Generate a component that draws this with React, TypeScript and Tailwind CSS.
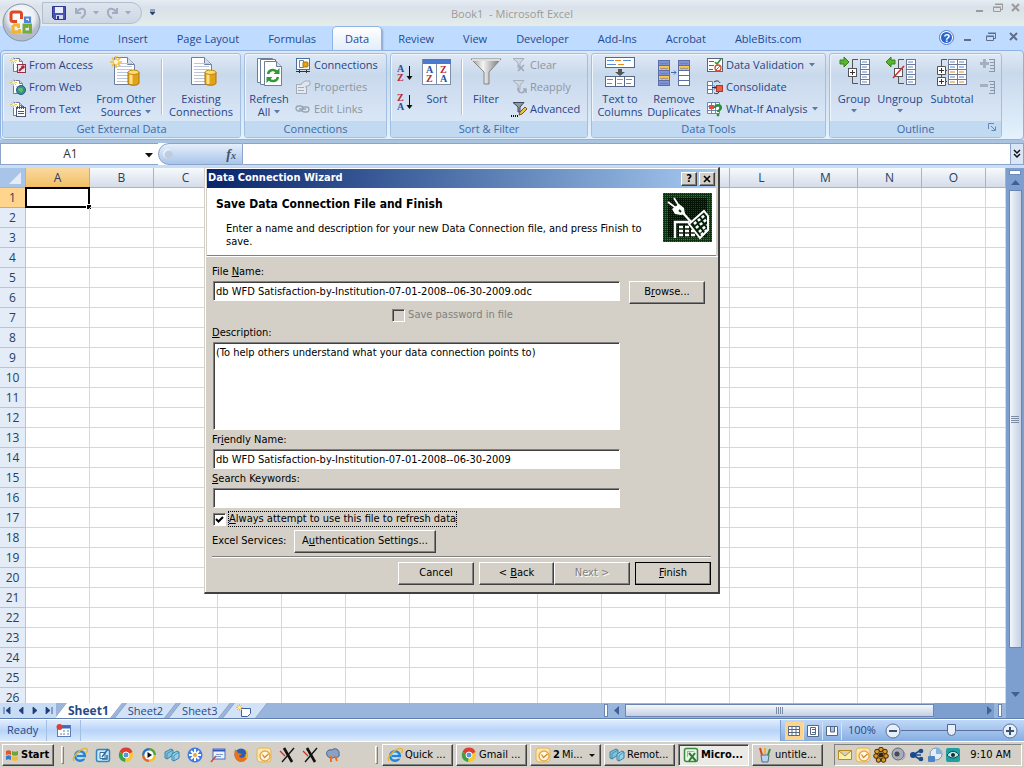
import type { ReactNode } from "react";
import clsx from "clsx";

type IconProps = { size?: number; className?: string; children?: ReactNode };

function Svg({ size = 16, className, children }: IconProps) {
  return (
    <svg width={size} height={size} viewBox={`0 0 ${size} ${size}`} className={clsx("shrink-0", className)} aria-hidden="true">
      {children}
    </svg>
  );
}

/* ---------- shared icon parts ---------- */

function Spark({ x = 0, y = 0, s = 1 }: { x?: number; y?: number; s?: number }) {
  return (
    <g transform={`translate(${x} ${y}) scale(${s})`} stroke="#f2bd3c" strokeWidth="1.4">
      <path d="M5 0v10M0 5h10M1.5 1.5l7 7M8.5 1.5l-7 7" />
      <circle cx="5" cy="5" r="1.8" fill="#fff9d0" stroke="none" />
    </g>
  );
}

function Sheet({ x, y, w, h }: { x: number; y: number; w: number; h: number }) {
  const fold = Math.round(w / 3);
  const lines = [];
  for (let i = 5; i < h - 2; i += 3) lines.push(i);
  return (
    <g transform={`translate(${x} ${y})`}>
      <path d={`M.5 .5H${w - fold}L${w + 0.5} ${fold + 0.5}V${h - 0.5}H.5Z`} fill="#fff" stroke="#6d7f99" />
      <path d={`M${w - fold + 0.5} .5V${fold + 0.5}H${w}`} fill="#d5dfec" stroke="#6d7f99" />
      {lines.map((l) => (
        <path key={l} d={`M3 ${l + 1.5}H${w - 2}`} stroke="#b9c6d9" />
      ))}
    </g>
  );
}

function Cylinder({ x, y }: { x: number; y: number }) {
  return (
    <g transform={`translate(${x} ${y})`}>
      <path d="M0 2v11c0 3 11 3 11 0V2" fill="#e2a416" stroke="#a97408" />
      <path d="M3 4v10" stroke="#fbe28a" strokeWidth="3" />
      <ellipse cx="5.5" cy="2.3" rx="5.5" ry="2.2" fill="#fbdc72" stroke="#b9860f" />
    </g>
  );
}

/* ---------- ribbon icons ---------- */

function FromIcon({ kind }: { kind: "access" | "web" | "text" }) {
  return (
    <Svg>
      <Sheet x={3} y={1} w={9} h={14} />
      <Spark s={0.7} />
      {kind === "access" && (
        <>
          <rect x="7.500" y="7.500" width="8" height="8" fill="#f6e4ea" stroke="#9b2d45" />
          <path d="M9 14l4-4" stroke="#9b2d45" strokeWidth="2" />
          <circle cx="13" cy="10" r="1.800" fill="#9b2d45" />
        </>
      )}
      {kind === "web" && (
        <>
          <circle cx="11" cy="11" r="4.500" fill="#3c8f8a" stroke="#1f5d86" />
          <path d="M9 9l3 0 1 2-2 3-1-2-2-1z" fill="#63c06a" />
        </>
      )}
      {kind === "text" && (
        <>
          <rect x="6.500" y="6.500" width="9" height="9" fill="#fff" stroke="#4b5a70" />
          <path d="M7.500 5v3M9.500 5v3M11.500 5v3M13.500 5v3M8 10.500h6M8 12.500h6" stroke="#4b5a70" />
        </>
      )}
    </Svg>
  );
}

const OtherSourcesIcon = () => (
  <Svg size={32}>
    <Sheet x={4} y={1} w={20} h={28} />
    <Spark x={0} y={0} s={1.2} />
    <Cylinder x={18} y={14} />
  </Svg>
);

const ExistingIcon = () => (
  <Svg size={32}>
    <Sheet x={6} y={1} w={20} h={28} />
    <Cylinder x={20} y={14} />
  </Svg>
);

const RefreshIcon = () => (
  <Svg size={32}>
    <path d="M4.500 2.500h15v24h-15z" fill="#fff" stroke="#6d7f99" />
    <path d="M7.500 3.500h15v25h-15z" fill="#fff" stroke="#6d7f99" />
    <path d="M11.500 5.500h12l5 5v19h-17z" fill="#fff" stroke="#6d7f99" />
    <path d="M23.500 5.500v5h5" fill="#d5dfec" stroke="#6d7f99" />
    <path d="M15 18c1-5 7-5 9-2M25 21c-1 5-7 5-9 2" stroke="#2f9a3a" strokeWidth="2.400" fill="none" />
    <path d="M26.500 12v6h-6zM13.500 27v-6h6z" fill="#2f9a3a" />
  </Svg>
);

const ConnectionsIcon = () => (
  <Svg>
    <rect x="1.500" y="1.500" width="13" height="11" fill="#fff" stroke="#4b6ea0" />
    <path d="M4.500 3.500v7h4v-7z" fill="#fff" stroke="#6d7f99" />
    <rect x="8" y="5" width="5" height="5" rx="1" fill="#e2a416" stroke="#a97408" />
    <path d="M1 14.500h14M4.500 13v3M11.500 13v3" stroke="#333" />
  </Svg>
);

const PropertiesIcon = () => (
  <Svg>
    <rect x="1.500" y="5.500" width="10" height="9" fill="#e5eaf1" stroke="#a3adba" />
    <path d="M3 8.500h6M3 11.500h6" stroke="#a3adba" />
    <path d="M6 5l4-3h5v4l-5 2" fill="#dfe5ed" stroke="#a3adba" />
  </Svg>
);

const LinksIcon = () => (
  <Svg>
    <g fill="none" stroke="#9aa5b3" strokeWidth="1.300">
      <rect x="1" y="5" width="7" height="5" rx="2.500" />
      <rect x="7" y="6" width="7" height="5" rx="2.500" />
      <path d="M4 8h7" />
    </g>
  </Svg>
);

function SortArrowIcon({ top, bottom }: { top: string; bottom: string }) {
  return (
    <svg width="16" height="18" viewBox="0 0 16 18" className="font-['Liberation_Serif'] text-[10px] font-bold" aria-hidden="true">
      <text x="0" y="8" fill={top === "A" ? "#27509b" : "#b22a34"}>{top}</text>
      <text x="0" y="17" fill={bottom === "A" ? "#27509b" : "#b22a34"}>{bottom}</text>
      <path d="M12.500 2v12" stroke="#111" />
      <path d="M9.500 12h6l-3 4z" fill="#111" />
    </svg>
  );
}

const SortIcon = () => (
  <svg width="32" height="32" viewBox="0 0 32 32" className="font-['Liberation_Serif'] text-[10px] font-bold" aria-hidden="true">
    <rect x="1.500" y="3.500" width="28" height="25" fill="#fff" stroke="#7d8ea8" />
    <rect x="2" y="3" width="28" height="5" fill="#4a7ad0" />
    <path d="M15.500 8v20" stroke="#7d8ea8" />
    <text x="5" y="17" fill="#27509b">A</text>
    <text x="5" y="26" fill="#b22a34">Z</text>
    <text x="19" y="17" fill="#b22a34">Z</text>
    <text x="19" y="26" fill="#27509b">A</text>
  </svg>
);

const FilterIcon = () => (
  <Svg size={32}>
    <defs>
      <linearGradient id="funnel">
        <stop offset="0" stopColor="#8e8e8e" />
        <stop offset=".4" stopColor="#f4f4f4" />
        <stop offset="1" stopColor="#6f6f6f" />
      </linearGradient>
    </defs>
    <path d="M1 3h30L19 16v12h-5V16z" fill="url(#funnel)" stroke="#848484" />
    <path d="M2 4h28" stroke="#ddd" strokeWidth="2" />
  </Svg>
);

function SmallFilterIcon({ kind }: { kind: "clear" | "reapply" | "advanced" }) {
  const dark = kind === "advanced";
  return (
    <Svg>
      <path d="M2 1.500h11L9 6v5H7V6z" fill={dark ? "#8f98a5" : "#cfd7e0"} stroke={dark ? "#3f4854" : "#a6b0bd"} />
      {kind === "clear" && <path d="M7 8l6 6M13 8l-6 6" stroke="#9fa9b6" strokeWidth="1.600" />}
      {kind === "reapply" && <path d="M7 9c0 6 6 6 7 1M12 10h3v4" stroke="#9fa9b6" strokeWidth="1.500" fill="none" />}
      {dark && (
        <>
          <path d="M8 14l1-3 5-5 2 2-5 5z" fill="#f2c14a" stroke="#7a5412" />
          <path d="M0 15h8" stroke="#111" strokeDasharray="1 1" strokeWidth="2" />
        </>
      )}
    </Svg>
  );
}

const TextToColumnsIcon = () => (
  <Svg size={32}>
    <rect x="1.500" y="1.500" width="29" height="10" fill="#fff" stroke="#56688a" />
    <path d="M3 4.500h7M19 4.500h8M3 8.500h9" stroke="#5b8bd0" />
    <path d="M11 4.500h6M14 8.500h6" stroke="#e2891b" />
    <path d="M14 13h4v3h3l-5 4-5-4h3z" fill="#555" />
    <rect x="1.500" y="20.500" width="29" height="10" fill="#fff" stroke="#56688a" />
    <path d="M11.500 20v10M20.500 20v10" stroke="#56688a" />
    <path d="M3 23.500h6M22 23.500h6M3 27.500h5M22 27.500h5" stroke="#5b8bd0" />
    <path d="M13 23.500h6M13 27.500h5" stroke="#e2891b" />
  </Svg>
);

const DuplicatesIcon = () => (
  <Svg size={32}>
    {[4, 9, 14, 19, 24].map((y, i) => (
      <g key={y} stroke="#5b6ea8">
        <rect x="0.500" y={y + 0.5} width="11" height="5" fill={i % 2 ? "#fbc650" : "#8294d6"} />
        <rect x="20.500" y={y + 0.5} width="11" height="5" fill={i === 0 ? "#8294d6" : i === 1 ? "#fbc650" : "#fff"} />
        <path d={`M2 ${y + 3}l2 1 2-1 2 1 2-1`} fill="none" strokeWidth=".7" />
        {i < 2 && <path d={`M22 ${y + 3}l2 1 2-1 2 1 2-1`} fill="none" strokeWidth=".7" />}
      </g>
    ))}
    <path d="M13 16.500h5M16 14.500l2 2-2 2" stroke="#3e6bb5" fill="none" />
  </Svg>
);

const ValidationIcon = () => (
  <Svg>
    <rect x=".5" y="1.500" width="15" height="13" fill="#fff" stroke="#5a6577" />
    <path d="M2 4.500h5M2 8.500h5M2 12.500h4" stroke="#5a6577" />
    <path d="M8 5l2 2 4-5" stroke="#2b9436" strokeWidth="1.600" fill="none" />
    <circle cx="11" cy="11" r="3" fill="#fff" stroke="#dd4b2c" strokeWidth="1.300" />
    <path d="M9 13l4-4" stroke="#dd4b2c" />
  </Svg>
);

const ConsolidateIcon = () => (
  <Svg>
    <path d="M.5 2.500h5v12h-5zM.5 6.500h5M.5 10.500h5" fill="#fff" stroke="#5d7eae" />
    <rect x="9.500" y="6.500" width="6" height="6" fill="#e8604c" stroke="#a93a2b" />
    <path d="M7 3c3-2 5-1 6 1M7 14c2 1 4 1 5-1M5 8.500h4M7 6.500l2 2-2 2" stroke="#333" fill="none" />
  </Svg>
);

const WhatIfIcon = () => (
  <Svg>
    <path d="M.5 1.500h12v11H.5zM4.500 1.500v11M8.500 1.500v11M.5 5.500h12M.5 9.500h12" fill="#fff" stroke="#6f86ad" />
    <rect x="2" y="4" width="5" height="4" fill="#e24a3c" />
    <path d="M8 7c0-4 6-4 6 0 0 2-3 2-3 4" stroke="#2c9136" strokeWidth="2.200" fill="none" />
    <circle cx="11" cy="14" r="1.400" fill="#2c9136" />
  </Svg>
);

function OutlineIcon({ kind }: { kind: "group" | "ungroup" | "subtotal" }) {
  const rows = [3, 8, 13, 18, 23];
  if (kind === "subtotal") {
    return (
      <Svg size={32}>
        {rows.map((y, i) => (
          <g key={y}>
            <rect x="12.500" y={y + 0.5} width="9" height="5" fill="#fff" stroke="#6d7890" />
            <rect x="21.500" y={y + 0.5} width="9" height="5" fill="#fff" stroke="#6d7890" />
            <path d={`M14 ${y + 3}h5M23 ${y + 3}h5`} stroke={i === 2 || i === 4 ? "#e2891b" : "#5b8bd0"} />
          </g>
        ))}
        <path d="M11 3.500H5.500V25M5 14.500h6M5 25.500h6" stroke="#555" fill="none" />
        <path d="M1.500 10.500h8v8h-8zM1.500 21.500h8v8h-8z" fill="#fff" stroke="#555" />
        <path d="M3 14.500h5M5.500 12v5M3 25.500h5M5.500 23v5" stroke="#333" />
      </Svg>
    );
  }
  return (
    <Svg size={32}>
      {rows.map((y) => (
        <g key={y}>
          <rect x="22.500" y={y + 0.5} width="9" height="5" fill="#fff" stroke="#6d7890" />
          <path d={`M24 ${y + 3}h5`} stroke="#5b8bd0" />
        </g>
      ))}
      <path d="M20 3.500h-5.500v24H20" stroke="#555" fill="none" />
      <rect x="10.500" y="12.500" width="8" height="8" fill="#fff" stroke="#555" />
      {kind === "group" ? (
        <>
          <path d="M12 16.500h5M14.500 14v5" stroke="#333" />
          <path d="M2 4h4V1l5 5-5 5V8H2z" fill="#59b530" stroke="#3a7e1c" />
        </>
      ) : (
        <>
          <path d="M9 22L20 10" stroke="#e0262a" strokeWidth="1.500" />
          <path d="M11 4H7V1L2 6l5 5V8h4z" fill="#59b530" stroke="#3a7e1c" />
        </>
      )}
    </Svg>
  );
}

function DetailIcon({ minus }: { minus?: boolean }) {
  return (
    <Svg>
      <path d={minus ? "M0 4h8v3H0z" : "M3 1h3v3h3v3H6v3H3V7H0V4h3z"} fill="#a6b0bd" />
      <path d="M9 1.500h6M10 4.500h5M10 7.500h5M10 10.500h5M9 13.500h6M14.500 1v13" stroke="#8997ab" />
    </Svg>
  );
}

/* ---------- ribbon pieces ---------- */

const Arrow = ({ className }: { className?: string }) => (
  <svg width="6" height="4" viewBox="0 0 6 4" className={clsx("inline-block shrink-0", className)} aria-hidden="true">
    <path d="M0 0h6L3 3.500z" fill="#5a7ba8" />
  </svg>
);

function BigButton({ icon, lines, arrow, className }: { icon: ReactNode; lines: string[]; arrow?: "inline" | "below"; className?: string }) {
  return (
    <button className={clsx("flex shrink-0 flex-col items-center pt-[2px] leading-[13px] whitespace-nowrap", className)}>
      {icon}
      <span className="mt-1">{lines[0]}</span>
      {lines[1] && (
        <span className="flex items-center gap-1">
          {lines[1]}
          {arrow === "inline" && <Arrow />}
        </span>
      )}
      {arrow === "below" && <Arrow className="mt-1" />}
    </button>
  );
}

function SmallButton({ icon, label, arrow, disabled }: { icon: ReactNode; label: string; arrow?: boolean; disabled?: boolean }) {
  return (
    <button disabled={disabled} className="flex h-[22px] items-center gap-[3px] whitespace-nowrap disabled:text-[#8d95a0]">
      {icon}
      {label}
      {arrow && <Arrow className="ml-[2px]" />}
    </button>
  );
}

function Group({ title, className, launcher, children }: { title: string; className: string; launcher?: boolean; children: ReactNode }) {
  return (
    <section className={clsx("flex shrink-0 flex-col overflow-hidden rounded-[3px] border border-[#a3bfdf] bg-linear-to-b from-[#dfe9f5] via-[#c9d9ec] via-25% to-[#dfebfa] shadow-[inset_1px_1px_0_#eef5fd]", className)}>
      <div className="flex h-[68px] px-[6px]">{children}</div>
      <h2 className="relative h-4 bg-[#c1d9f1] text-center leading-[15px] text-[#3e6aaa]">
        {title}
        {launcher && (
          <button aria-label="Outline settings" className="absolute top-[2px] right-1">
            <svg width="9" height="9" viewBox="0 0 9 9" className="block" aria-hidden="true">
              <path d="M.5 6V.5H6M3 3l4 4M7.500 3.500v4h-4" stroke="#6287b8" fill="none" />
            </svg>
          </button>
        )}
      </h2>
    </section>
  );
}

const Rule = ({ className }: { className?: string }) => <div className={clsx("mt-[5px] h-14 w-px shrink-0 bg-white shadow-[-1px_0_0_#a9c1de]", className)} />;

function WindowControls({ className }: { className?: string }) {
  return (
    <div className={clsx("flex items-center", className)}>
      <button aria-label="Minimize">
        <Svg size={12}><path d="M2 9h7" stroke="currentColor" strokeWidth="2" /></Svg>
      </button>
      <button aria-label="Restore">
        <Svg size={12}><path d="M1.500 5.500h7v4h-7zM1 5h8M3.500 3V2.500h7v5H9M3 2h8" stroke="currentColor" fill="none" /></Svg>
      </button>
      <button aria-label="Close">
        <Svg size={12}><path d="M2 2l7 7M9 2l-7 7" stroke="currentColor" strokeWidth="2" /></Svg>
      </button>
    </div>
  );
}

function TitleBar() {
  return (
    <header className="relative flex h-[26px] shrink-0 items-center justify-center bg-linear-to-b from-[#e6ecf3] via-[#dae1ea] via-30% to-[#e5ece9] pt-[2px] text-[#9b9b9b]">
      <div className="absolute top-[2px] left-[42px] flex h-[22px] items-center rounded-r-full border border-[#b3bfd0] bg-linear-to-b from-[#dde4ed] to-[#cdd7e4] pr-[10px] pl-[8px]">
        <button aria-label="Save">
          <Svg>
            <path d="M1.500 1.500h13v13h-11l-2-2z" fill="#4a52b5" stroke="#2f3690" />
            <rect x="4" y="2" width="8" height="6" fill="#e9eefb" />
            <rect x="5" y="10" width="7" height="4" fill="#d4daf0" />
            <rect x="6" y="11" width="2" height="3" fill="#2f3690" />
          </Svg>
        </button>
        <button aria-label="Undo" className="ml-[6px] flex items-center gap-1">
          <Svg><path d="M3 3v5h5M3.500 7.500C7 2 13 3 12 8c0 3-2 4-4 5" stroke="#a2adc4" strokeWidth="2" fill="none" /></Svg>
          <Arrow className="opacity-50" />
        </button>
        <button aria-label="Redo" className="ml-[6px] flex items-center gap-1">
          <Svg><path d="M12 3v5H7M11.500 7.500C8 2 2 3 3 8c0 3 2 4 4 5" stroke="#a2adc4" strokeWidth="2" fill="none" /></Svg>
          <Arrow className="opacity-50" />
        </button>
      </div>
      <button aria-label="Customize" className="absolute top-[9px] left-[149px]">
        <Svg size={7} className="block"><path d="M1 1h5M1 3h5L3.500 6z" stroke="#27446f" fill="#27446f" strokeWidth=".8" /></Svg>
      </button>
      <h1 className="text-[11px]">Book1&nbsp; - Microsoft Excel</h1>
      <WindowControls className="absolute top-[2px] right-[2px] gap-[6px]" />
    </header>
  );
}

const OfficeButton = () => (
  <button aria-label="Office Button" className="absolute top-[3px] left-[2px] z-10">
    <svg width="39" height="39" viewBox="0 0 39 39" aria-hidden="true">
      <defs>
        <radialGradient id="orb" cy=".35">
          <stop offset="0" stopColor="#fff" />
          <stop offset=".7" stopColor="#eceff3" />
          <stop offset="1" stopColor="#b4bcc9" />
        </radialGradient>
      </defs>
      <circle cx="19.500" cy="19.500" r="18.500" fill="url(#orb)" stroke="#8793a8" />
      <g fill="none" strokeWidth="3">
        <path d="M15 18.500h-4a2 2 0 0 1-2-2V11a2 2 0 0 1 2-2h6.500a2 2 0 0 1 2 2v5" stroke="#dd4a22" />
        <path d="M23 14.500h5v4.500h-5zM25 17v2" stroke="#4f87d6" strokeWidth="2.200" />
        <path d="M11 22h5.500v3M11 22v7h6.500v-3" stroke="#f6b42a" />
        <path d="M22 22h6.500v7H22zM25 22v3" stroke="#74ab3a" />
      </g>
    </svg>
  </button>
);

const tabs = ["Home", "Insert", "Page Layout", "Formulas", "Data", "Review", "View", "Developer", "Add-Ins", "Acrobat", "AbleBits.com"];

function TabRow() {
  return (
    <nav className="flex h-6 shrink-0 items-end justify-between bg-[#bfdbff] pl-[46px] text-[#1f4a92]">
      <div className="flex gap-[5px]">
        {tabs.map((t) => (
          <button
            key={t}
            className={clsx(
              "h-[23px] rounded-t-[4px] px-3 leading-[22px] whitespace-nowrap",
              t === "Data" && "bg-linear-to-b from-white to-[#e3edf9] shadow-[0_0_0_1px_#8db2e3,2px_1px_2px_#8aa5cc]"
            )}
          >
            {t}
          </button>
        ))}
      </div>
      <div className="flex h-full items-center gap-2 pr-1 pb-[2px] text-[#5f6f8a]">
        <button aria-label="Help">
          <svg width="15" height="15" viewBox="0 0 15 15" className="font-['Liberation_Sans'] text-[11px] font-bold" aria-hidden="true">
            <circle cx="7.500" cy="7.500" r="7" fill="#fff" stroke="#4d79c4" />
            <circle cx="7.500" cy="7.500" r="5.500" fill="#2a62c9" />
            <text x="4.500" y="11.500" fill="#fff">?</text>
          </svg>
        </button>
        <WindowControls className="gap-[11px]" />
      </div>
    </nav>
  );
}

function Ribbon() {
  return (
    <div className="relative flex h-[90px] shrink-0 gap-[3px] overflow-hidden rounded-[4px] border border-[#8db2e3] bg-linear-to-b from-[#dfe9f5] via-[#c9d9ec] via-25% to-[#e3f2fd] px-px pt-[2px] pb-px text-[#27468a]">
      <Group title="Get External Data" className="w-[239px]">
        <div className="w-[84px] shrink-0 pl-px">
          <SmallButton icon={<FromIcon kind="access" />} label="From Access" />
          <SmallButton icon={<FromIcon kind="web" />} label="From Web" />
          <SmallButton icon={<FromIcon kind="text" />} label="From Text" />
        </div>
        <BigButton className="w-[66px]" icon={<OtherSourcesIcon />} lines={["From Other", "Sources"]} arrow="inline" />
        <Rule className="ml-[3px]" />
        <BigButton className="w-[76px]" icon={<ExistingIcon />} lines={["Existing", "Connections"]} />
      </Group>
      <Group title="Connections" className="w-[143px]">
        <BigButton className="w-9" icon={<RefreshIcon />} lines={["Refresh", "All"]} arrow="inline" />
        <div className="ml-2">
          <SmallButton icon={<ConnectionsIcon />} label="Connections" />
          <SmallButton icon={<PropertiesIcon />} label="Properties" disabled />
          <SmallButton icon={<LinksIcon />} label="Edit Links" disabled />
        </div>
      </Group>
      <Group title="Sort & Filter" className="w-[198px]">
        <div className="flex w-4 flex-col gap-[11px] pt-[10px]">
          <button aria-label="Sort A to Z"><SortArrowIcon top="A" bottom="Z" /></button>
          <button aria-label="Sort Z to A"><SortArrowIcon top="Z" bottom="A" /></button>
        </div>
        <BigButton className="ml-[6px] w-9" icon={<SortIcon />} lines={["Sort"]} />
        <Rule className="ml-[7px]" />
        <BigButton className="ml-[7px] w-8" icon={<FilterIcon />} lines={["Filter"]} />
        <div className="ml-[9px]">
          <SmallButton icon={<SmallFilterIcon kind="clear" />} label="Clear" disabled />
          <SmallButton icon={<SmallFilterIcon kind="reapply" />} label="Reapply" disabled />
          <SmallButton icon={<SmallFilterIcon kind="advanced" />} label="Advanced" />
        </div>
      </Group>
      <Group title="Data Tools" className="w-[235px]">
        <BigButton className="w-11" icon={<TextToColumnsIcon />} lines={["Text to", "Columns"]} />
        <BigButton className="ml-1 w-14" icon={<DuplicatesIcon />} lines={["Remove", "Duplicates"]} />
        <div className="ml-[5px]">
          <SmallButton icon={<ValidationIcon />} label="Data Validation" arrow />
          <SmallButton icon={<ConsolidateIcon />} label="Consolidate" />
          <SmallButton icon={<WhatIfIcon />} label="What-If Analysis" arrow />
        </div>
      </Group>
      <Group title="Outline" className="w-[173px]" launcher>
        <BigButton className="w-9" icon={<OutlineIcon kind="group" />} lines={["Group"]} arrow="below" />
        <BigButton className="ml-[3px] w-[50px]" icon={<OutlineIcon kind="ungroup" />} lines={["Ungroup"]} arrow="below" />
        <BigButton className="ml-[3px] w-12" icon={<OutlineIcon kind="subtotal" />} lines={["Subtotal"]} />
        <div className="ml-1 flex flex-col gap-[6px] pt-1">
          <button aria-label="Show Detail"><DetailIcon /></button>
          <button aria-label="Hide Detail"><DetailIcon minus /></button>
        </div>
      </Group>
    </div>
  );
}

function FormulaBar() {
  return (
    <div className="flex h-7 shrink-0 border-t-[3px] border-b-[3px] border-t-[#a9c3e0] border-b-[#c9def5] bg-white text-[12px]">
      <input aria-label="Name Box" defaultValue="A1" className="w-[140px] border-y border-l border-[#8ba4c7] bg-white text-center text-[#333] outline-none" />
      <button aria-label="Names" className="w-[18px] border-y border-[#8ba4c7] pl-1">
        <Svg size={9}><path d="M1 3h8L5 7.500z" fill="#111" /></Svg>
      </button>
      <div className="flex w-[85px] items-center justify-between rounded-l-full border border-[#8ba4c7] bg-linear-to-b from-[#e6effb] to-[#a9c4ea] pr-[6px] pl-1">
        <span className="size-[10px] rounded-full bg-[#bccbe0] shadow-[inset_1px_1px_2px_#fff]" />
        <button aria-label="Insert Function" className="font-['Liberation_Serif'] text-[14px] font-bold text-[#44546f] italic">
          f<span className="text-[10px]">x</span>
        </button>
      </div>
      <input aria-label="Formula" className="min-w-0 flex-1 border-y border-[#8ba4c7] bg-white outline-none" />
      <button aria-label="Expand Formula Bar" className="w-[14px] border border-[#8ba4c7] bg-[#d8e6f8]">
        <Svg size={12}><path d="M3 2l3 3 3-3M3 6l3 3 3-3" stroke="#111" strokeWidth="1.500" fill="none" /></Svg>
      </button>
    </div>
  );
}

const columns = ["A", "B", "C", "D", "E", "F", "G", "H", "I", "J", "K", "L", "M", "N", "O", ""];
const rows = Array.from({ length: 26 }, (_, i) => i + 1);

function Grid() {
  return (
    <table className="w-full table-fixed border-separate border-spacing-0 bg-white text-[12px] text-[#27405f]">
      <thead>
        <tr className="h-5">
          <th aria-label="Select all" className="w-[26px] border-r border-b border-[#9eb6ce] bg-[#a9c4e9] p-0">
            <Svg size={18} className="ml-1"><path d="M17 3v12H5z" fill="#e3ecf8" /></Svg>
          </th>
          {columns.map((c) => (
            <th
              key={c}
              className={clsx(
                "border-r border-b p-0 leading-[19px] font-normal",
                c && "w-16",
                c === "A" ? "border-[#e2a65c] bg-linear-to-b from-[#f9d99f] to-[#f1bf63]" : "border-[#9eb6ce] bg-linear-to-b from-[#f7fafd] to-[#d5dde9]"
              )}
            >
              {c}
            </th>
          ))}
        </tr>
      </thead>
      <tbody>
        {rows.map((r) => (
          <tr key={r} className="h-5">
            <th className={clsx("border-r border-b p-0 leading-[19px] font-normal", r === 1 ? "border-[#e2a65c] bg-[#ffd58d]" : "border-[#b3c6de] bg-[#e4ecf7]")}>{r}</th>
            {columns.map((c) => (
              <td key={c} className="relative border-r border-b border-[#d0d7e5] p-0">
                {r === 1 && c === "A" && (
                  <span className="absolute -inset-px border-2 border-black">
                    <span className="absolute -right-[3px] -bottom-[3px] size-[5px] border-t border-l border-white bg-black" />
                  </span>
                )}
              </td>
            ))}
          </tr>
        ))}
      </tbody>
    </table>
  );
}

function VerticalScrollbar() {
  return (
    <div className="flex w-[18px] shrink-0 flex-col items-center bg-[#7d9fd0] pt-[2px] pb-1">
      <span className="h-[5px] w-3 border border-[#6d8cbd] bg-white" />
      <button aria-label="Scroll up" className="grid h-[15px] place-items-center">
        <Svg size={9}><path d="M0 7h9L4.500 2z" fill="#3f5f96" /></Svg>
      </button>
      <div className="flex w-[13px] flex-1 flex-col items-center justify-center gap-px border border-[#6a85b3] bg-linear-to-r from-[#f2f5fa] to-[#c3cfe2]">
        {[0, 1, 2, 3].map((i) => (
          <span key={i} className="h-px w-2 bg-[#7d8ba5]" />
        ))}
      </div>
      <div className="h-[42px]" />
      <button aria-label="Scroll down">
        <Svg size={9}><path d="M0 2h9L4.500 7z" fill="#3f5f96" /></Svg>
      </button>
    </div>
  );
}

function SheetTab({ label, active, children }: { label?: string; active?: boolean; children?: ReactNode }) {
  return (
    <button
      aria-label={label ?? "Insert Worksheet"}
      className={clsx(
        "relative isolate -ml-px h-[15px] px-2 leading-[15px] before:absolute before:inset-0 before:-z-10 before:-skew-x-[38deg] before:border-x before:border-[#7c97c1]",
        active ? "z-10 text-[12px] font-bold before:bg-white" : "before:bg-[#d3e2f7]"
      )}
    >
      {label}
      {children}
    </button>
  );
}

const navPaths = ["M2 1v7M8 1v7L4 4.500z", "M7 1v7L3 4.500z", "M3 1v7l4-3.500z", "M8 1v7M2 1v7l4-3.500z"];

function SheetTabs() {
  return (
    <div className="flex h-4 shrink-0 items-start border-b border-[#5f7fb2] bg-[#9ab5dc] text-[#274a86]">
      <div className="flex h-full w-[56px] shrink-0 items-center justify-around bg-[#c9dcf5]">
        {navPaths.map((d) => (
          <button key={d} aria-label="Scroll sheets">
            <Svg size={10}><path d={d} fill="#1f3f7a" stroke="#1f3f7a" strokeWidth=".8" /></Svg>
          </button>
        ))}
      </div>
      <div className="flex flex-1 gap-1 overflow-hidden pl-[5px]">
        <SheetTab label="Sheet1" active />
        <SheetTab label="Sheet2" />
        <SheetTab label="Sheet3" />
        <SheetTab>
          <svg width="18" height="14" viewBox="0 0 18 14" aria-hidden="true">
            <path d="M5.500 4.500h9v5l-3 3h-6z" fill="#fff" stroke="#40609a" />
            <Spark s={0.7} />
          </svg>
        </SheetTab>
      </div>
      <div className="flex h-full w-[420px] shrink-0 items-center">
        <span className="h-[13px] w-1 border border-[#6a85b3] bg-white" />
        <button aria-label="Scroll left" className="flex w-[17px] justify-center">
          <Svg size={9}><path d="M7 0v9L2 4.500z" fill="#3f5f96" /></Svg>
        </button>
        <div className="flex h-[13px] w-[309px] items-center justify-center gap-px border border-[#6a85b3] bg-linear-to-b from-[#f6f8fb] to-[#c3cfe2]">
          {[0, 1, 2, 3].map((i) => (
            <span key={i} className="h-[7px] w-px bg-[#7d8ba5]" />
          ))}
        </div>
        <div className="h-full flex-1 bg-[#7d9fd0]" />
        <button aria-label="Scroll right" className="h-full bg-[#7d9fd0]">
          <Svg size={9}><path d="M2 0v9l5-4.500z" fill="#3f5f96" /></Svg>
        </button>
        <span className="mx-1 h-[13px] w-1 border border-[#6a85b3] bg-white" />
        <span className="h-full w-[18px] bg-[#7d9fd0]" />
      </div>
    </div>
  );
}

function StatusBar() {
  return (
    <footer className="flex h-[22px] shrink-0 items-center border-t border-white bg-linear-to-b from-[#e0edfd] via-[#b7d4f8] via-50% to-[#d9eafd] text-[#27468a]">
      <span className="flex h-full w-[47px] items-center border-r border-[#a4c0e6] pl-[7px]">Ready</span>
      <button aria-label="Record Macro" className="flex h-full w-[34px] items-center justify-center border-r border-[#a4c0e6]">
        <Svg>
          <rect x="1.500" y="2.500" width="13" height="11" fill="#fff" stroke="#5c7eb7" />
          <path d="M2 4h12" stroke="#3a6bc0" strokeWidth="3" />
          <path d="M7 8h2M11 8h2M4 11h2M7 11h2M11 11h2" stroke="#5c7eb7" />
          <circle cx="3.500" cy="4" r="3" fill="#d8413a" />
        </Svg>
      </button>
      <div className="flex-1" />
      <div className="flex h-full w-[244px] items-center border-l border-[#7a9ccf] bg-linear-to-b from-[#c0d8f7] to-[#86aee3] pl-1">
        {["M2.500 3.500h11v9h-11zM2 6.500h12M2 9.500h12M6 3v10M10 3v10", "M2.500 2.500h11v11h-11zM5.500 4.500h5v7h-5zM7 6.500h3M7 9.500h3", "M2.500 3.500h11v9h-11zM6.500 3v6h4V3"].map((d, i) => (
          <button key={d} aria-label={["Normal", "Page Layout view", "Page Break Preview"][i]} className={clsx("grid h-[18px] w-[19px] place-items-center border-r border-[#d6e4f7]", i === 0 && "bg-[#fdd48d]")}>
            <Svg><path d={d} fill="#fff" stroke="#566884" /></Svg>
          </button>
        ))}
        <label htmlFor="zoom" className="ml-[6px] w-8">100%</label>
        <button aria-label="Zoom Out" className="ml-[5px]">
          <Svg><circle cx="8" cy="8" r="7" fill="#e6effa" stroke="#5b7199" /><path d="M4 8h8" stroke="#39506f" strokeWidth="2" /></Svg>
        </button>
        <input
          id="zoom"
          type="range"
          defaultValue={50}
          className="h-[14px] w-[101px] appearance-none bg-transparent [&::-webkit-slider-runnable-track]:h-px [&::-webkit-slider-runnable-track]:bg-[#5b7199] [&::-webkit-slider-thumb]:-mt-[6px] [&::-webkit-slider-thumb]:h-3 [&::-webkit-slider-thumb]:w-[9px] [&::-webkit-slider-thumb]:appearance-none [&::-webkit-slider-thumb]:rounded-b-full [&::-webkit-slider-thumb]:border [&::-webkit-slider-thumb]:border-[#4f6790] [&::-webkit-slider-thumb]:bg-[#e6effa]"
        />
        <button aria-label="Zoom In">
          <Svg><circle cx="8" cy="8" r="7" fill="#e6effa" stroke="#5b7199" /><path d="M4 8h8M8 4v8" stroke="#39506f" strokeWidth="2" /></Svg>
        </button>
      </div>
    </footer>
  );
}

/* ---------- taskbar ---------- */

const raised = "border border-t-white border-l-white border-r-[#404040] border-b-[#404040] shadow-[inset_-1px_-1px_0_#808080]";
const sunken = "border border-t-[#808080] border-l-[#808080] border-r-white border-b-white shadow-[inset_1px_1px_0_#404040]";

const IeIcon = () => (
  <Svg>
    <circle cx="8" cy="9" r="4.800" fill="#bfe2fa" stroke="#2583d8" strokeWidth="2.600" />
    <path d="M5 9h9" stroke="#2583d8" strokeWidth="2.200" />
    <path d="M10 11h5" stroke="#d4d0c8" strokeWidth="1.500" />
    <path d="M2 14C-1 10 11-1 15 2c1 1 0 3-1 4" stroke="#e8b42c" strokeWidth="1.400" fill="none" />
  </Svg>
);
const ChromeIcon = () => (
  <Svg>
    <circle cx="8" cy="8" r="7" fill="#f5c92f" />
    <path d="M8 8L1.500 5A7 7 0 0 1 14.500 5z" fill="#dc3f31" />
    <path d="M8 8L1.500 5A7 7 0 0 0 7 15z" fill="#3ba24a" />
    <circle cx="8" cy="8" r="3" fill="#5b94dc" stroke="#fff" />
  </Svg>
);
const OutlookIcon = () => (
  <Svg>
    <rect x="1" y="1" width="14" height="14" rx="3" fill="#fce7ae" stroke="#e3b45a" />
    <circle cx="9" cy="9" r="5" fill="#fff8e6" stroke="#e6aa4a" strokeWidth="1.500" />
    <path d="M6.500 7.500l2 3 4-3.500" stroke="#d08a26" strokeWidth="1.300" fill="none" />
  </Svg>
);
const RemoteIcon = () => (
  <Svg>
    <path d="M1 5l6-3 2 1v5l-6 4-2-1z" fill="#7cc3df" stroke="#3c83a4" />
    <path d="M8 7l5-3 2 1v6l-5 3-2-1z" fill="#93d2e8" stroke="#3c83a4" />
    <path d="M3 6.500L9 3M3 6.500V12M10 8.500L15 5M10 8.500V14" stroke="#3c83a4" strokeWidth=".8" />
  </Svg>
);
const DesktopIcon = () => (
  <Svg>
    <rect x="1.500" y="2.500" width="13" height="12" rx="2" fill="#cfe6f7" stroke="#3286bd" strokeWidth="1.500" />
    <path d="M5 5.500h5v6H5z" fill="#fff" stroke="#2e6f9f" />
    <path d="M7 10l6-8M12 8v4H7" stroke="#2e6f9f" strokeWidth="1.500" fill="none" />
  </Svg>
);
const MediaIcon = () => (
  <Svg>
    <circle cx="8" cy="8" r="7" fill="#f0c227" />
    <path d="M8 8V1a7 7 0 0 1 7 7z" fill="#4ba342" />
    <path d="M8 8H1a7 7 0 0 1 7-7z" fill="#2f6fc9" />
    <path d="M8 8H1a7 7 0 0 0 7 7z" fill="#e0662b" />
    <circle cx="8" cy="8" r="4.600" fill="#fff" />
    <path d="M6.500 5v6l4.500-3z" fill="#111" />
  </Svg>
);
const FlowerIcon = () => (
  <Svg>
    <circle cx="8" cy="8" r="7.500" fill="#3f7be0" />
    <path d="M8 2v12M2 8h12M4 4l8 8M12 4l-8 8" stroke="#fff" strokeWidth="2" />
    <circle cx="8" cy="8" r="2" fill="#f2a32e" />
  </Svg>
);
const NotesIcon = () => (
  <Svg>
    <rect x="3" y="2" width="12" height="10" fill="#eef4ff" stroke="#4a6fc0" />
    <path d="M3 3.500h12" stroke="#3158bd" strokeWidth="2" />
    <path d="M6 7.500h7M6 9.500h5" stroke="#7e9bd5" />
    <path d="M1 15l5-6" stroke="#c94c3e" strokeWidth="1.500" />
  </Svg>
);
const FirefoxIcon = () => (
  <Svg>
    <circle cx="8" cy="8" r="6.500" fill="#2b5fb4" />
    <path d="M2 2c-2 7 1 13 6 13 6 0 8-6 6-11 0 3-1 3-2 3 1 4-5 5-6 2l3-2-4-1z" fill="#e8731c" />
    <path d="M13 3c2 3 1 6 0 8" stroke="#f9c234" fill="none" strokeWidth="1.500" />
  </Svg>
);
const XIcon = () => (
  <Svg>
    <path d="M15 1L3 15" stroke="#111" strokeWidth="1.300" />
    <path d="M5 1l8 14" stroke="#111" strokeWidth="2.600" />
    <path d="M1 4l5 5" stroke="#d32c23" strokeWidth="1.300" />
  </Svg>
);
const CloudIcon = () => (
  <Svg>
    <path d="M2 8c-2-4 3-6 5-5 3-3 8 0 7 4 1 3-2 4-4 3-3 2-7 1-8-2z" fill="#86a2c6" stroke="#4a6286" />
    <path d="M6 9v6M10 9l2 5" stroke="#ea7124" strokeWidth="2" />
  </Svg>
);
const ExcelIcon = () => (
  <Svg>
    <rect x="1.500" y="1.500" width="13" height="13" rx="2" fill="#e8f5e6" stroke="#3a8b3c" strokeWidth="1.500" />
    <path d="M6 6l7 8M12 6l-6 8" stroke="#2d7d33" strokeWidth="2" />
    <path d="M4 4.500h7M4.500 4v6" stroke="#8cc28a" />
  </Svg>
);
const PaintIcon = () => (
  <Svg>
    <path d="M4 8h8l-1 7H5z" fill="#b9d3ea" stroke="#4b6f93" />
    <path d="M5 8L3 1" stroke="#d5402c" strokeWidth="2" />
    <path d="M8 7V1" stroke="#e9b42b" strokeWidth="2" />
    <path d="M11 8l2-6" stroke="#3b8d3d" strokeWidth="2" />
  </Svg>
);

const quickLaunch = [IeIcon, DesktopIcon, ChromeIcon, MediaIcon, RemoteIcon, FlowerIcon, NotesIcon, FirefoxIcon, OutlookIcon, XIcon, XIcon, CloudIcon];

const tasks = [
  { label: "Quick ...", Icon: IeIcon },
  { label: "Gmail ...", Icon: ChromeIcon },
  { label: "Mi...", Icon: OutlookIcon, count: 2 },
  { label: "Remot...", Icon: RemoteIcon },
  { label: "Micro...", Icon: ExcelIcon, active: true },
  { label: "untitle...", Icon: PaintIcon },
];

function Taskbar() {
  return (
    <div className="flex h-[27px] shrink-0 items-center border-t border-white bg-[#d4d0c8] px-[2px] font-['DejaVu_Sans_Condensed','DejaVu_Sans',sans-serif] text-[11px] text-black">
      <button className={clsx("flex h-[22px] w-[52px] items-center gap-[2px] bg-[#d4d0c8] pl-[2px] text-[11px] font-bold", raised)}>
        <Svg size={14}>
          <path d="M1 3c2-1 3-1 5 0v4c-2-1-3-1-5 0z" fill="#e4552b" />
          <path d="M7 3c2 1 4 1 6 0v4c-2 1-4 1-6 0z" fill="#66a83a" />
          <path d="M1 8c2-1 3-1 5 0v4c-2-1-3-1-5 0z" fill="#3978cf" />
          <path d="M7 8c2 1 4 1 6 0v4c-2 1-4 1-6 0z" fill="#f4bd2a" />
        </Svg>
        Start
      </button>
      <span className="mr-2 ml-[7px] h-[18px] w-[3px] border border-t-white border-r-[#808080] border-b-[#808080] border-l-white" />
      <div className="flex gap-[7px]">
        {quickLaunch.map((Icon, i) => (
          <button key={i} aria-label={`Launch ${i + 1}`}><Icon /></button>
        ))}
      </div>
      <span className="mr-1 ml-auto h-[18px] w-[3px] border border-t-white border-r-[#808080] border-b-[#808080] border-l-white" />
      <div className="flex gap-[3px]">
        {tasks.map(({ label, Icon, count, active }) => (
          <button key={label} className={clsx("flex h-[22px] w-[71px] items-center gap-[2px] overflow-hidden pl-1 whitespace-nowrap", active ? "bg-[#eceae6] font-bold" : "bg-[#d4d0c8]", active ? sunken : raised)}>
            <Icon />
            {count && <b>{count}</b>}
            {label}
            {count && <Svg size={7} className="ml-[3px]"><path d="M1 2h6L4 5z" fill="#111" /></Svg>}
          </button>
        ))}
      </div>
      <div className="ml-[11px] flex h-[22px] w-[188px] items-center gap-[2px] border border-t-[#808080] border-r-white border-b-white border-l-[#808080] pl-[2px]">
        <Svg><path d="M1.500 3.500h13v9h-13zM2 4l6 5 6-5" fill="#fdf0a8" stroke="#b98b1d" /></Svg>
        <OutlookIcon />
        <Svg>
          {[[8, 2.5], [12, 4.5], [13, 9], [10.5, 13], [5.5, 13], [3, 9], [4, 4.5]].map(([x, y]) => (
            <circle key={`${x}-${y}`} cx={x} cy={y} r="2.300" fill="#e29a1b" stroke="#3a2606" />
          ))}
          <circle cx="8" cy="8" r="2.500" fill="#3a2606" />
        </Svg>
        <Svg><circle cx="7" cy="7" r="6" fill="#a9adb8" stroke="#676c7a" /><circle cx="6" cy="7" r="2.500" fill="#444955" /><path d="M13 5c2 3 1 6-2 8" stroke="#9a90c8" fill="none" /></Svg>
        <Svg><path d="M4 8l8-5M4 8l8 5M4 8h8" stroke="#174a8f" strokeWidth="1.500" /><circle cx="4" cy="8" r="3" fill="#174a8f" /><circle cx="12" cy="4" r="2.300" fill="#174a8f" /><circle cx="12" cy="12" r="2.300" fill="#174a8f" /></Svg>
        <Svg><circle cx="9" cy="7" r="6" fill="#e5ecf5" stroke="#7c92b2" /><path d="M9 7V1a6 6 0 0 1 6 6z" fill="#7db4e4" /><rect x="1" y="9" width="7" height="6" rx="1" fill="#4b83c7" /></Svg>
        <Svg><rect x="1" y="1" width="14" height="14" rx="2" fill="#1f9fa4" /><path d="M2 8c4-5 8-5 12 0-4 4-8 4-12 0z" fill="#bfe9e6" stroke="#0d4448" /><circle cx="8" cy="8" r="2" fill="#0d2f35" /></Svg>
        <time className="ml-auto pr-[10px]">9:10 AM</time>
      </div>
    </div>
  );
}

/* ---------- wizard dialog ---------- */

const field = "block w-[407px] border border-t-[#808080] border-l-[#808080] border-r-white border-b-white bg-white px-[2px] shadow-[inset_1px_1px_0_#404040] outline-none";
const dialogButton = clsx("h-[23px] bg-[#d4d0c8] text-center disabled:text-[#808080] disabled:text-shadow-[1px_1px_0_#fff]", raised);

function WizardIcon() {
  return (
    <svg width="49" height="49" viewBox="0 0 49 49" className="shrink-0" aria-hidden="true">
      <defs>
        <pattern id="dots" width="2" height="2" patternUnits="userSpaceOnUse">
          <rect width="2" height="2" fill="#0b3511" />
          <rect width="1" height="1" fill="#2a7a31" />
        </pattern>
        <pattern id="dots-dark" width="2" height="2" patternUnits="userSpaceOnUse">
          <rect width="2" height="2" fill="#031405" />
          <rect width="1" height="1" fill="#14491a" />
        </pattern>
      </defs>
      <rect width="49" height="49" fill="url(#dots)" />
      <rect x="5" y="5" width="39" height="39" fill="url(#dots-dark)" />
      <path d="M5 9l8 6M11 5l5 8" stroke="#fff" strokeWidth="1.800" />
      <path d="M9 16l7-5 5 4 1 6-4 1-6-1z" fill="#fff" />
      <path d="M16 17l2 2" stroke="#0b3511" strokeWidth="2" />
      <path d="M20 20l9 10" stroke="#fff" strokeWidth="2.200" />
      <path d="M12 45V29h14" stroke="#fff" strokeWidth="2.400" fill="none" />
      <path d="M16 34h4M22 34h4M16 38h4M22 38h4M28 38h3M16 42h4M22 42h4M28 42h4" stroke="#fff" strokeWidth="2.400" />
      <path d="M26 31L41 18l4 5v14l-8 8z" fill="#04220a" stroke="#fff" strokeWidth="2" />
      <path d="M31 31l11-9M33 35l11-9M36 39l8-7M38 42l6-5" stroke="#fff" strokeWidth="2.600" strokeDasharray="3 2" />
    </svg>
  );
}

function Wizard() {
  return (
    <div role="dialog" aria-labelledby="wizard-title" className="absolute top-[167px] left-[204px] w-[516px] border-t border-r-2 border-b-2 border-l border-t-[#d4d0c8] border-r-[#404040] border-b-[#404040] border-l-[#d4d0c8] bg-[#d4d0c8] font-['DejaVu_Sans_Condensed','DejaVu_Sans',sans-serif] text-[11px] text-black shadow-[inset_1px_1px_0_#fff]">
      <div className="mx-[2px] mt-px flex h-[19px] items-center bg-linear-to-r from-[#0a246a] to-[#a6caf0] px-px">
        <h2 id="wizard-title" className="flex-1 font-bold text-white">Data Connection Wizard</h2>
        <button aria-label="Help" className={clsx("mr-[2px] h-[14px] w-4 bg-[#d4d0c8] leading-[11px] font-bold", raised)}>?</button>
        <button aria-label="Close" className={clsx("grid h-[14px] w-4 place-items-center bg-[#d4d0c8]", raised)}>
          <Svg size={8}><path d="M1 1l6 6M7 1L1 7" stroke="#000" strokeWidth="1.600" /></Svg>
        </button>
      </div>

      <div className="mx-[2px] flex h-[68px] justify-between border-b border-[#808080] bg-white pt-[5px] pr-1 pl-[9px]">
        <div>
          <h3 className="text-[12px] leading-[23px] font-bold">Save Data Connection File and Finish</h3>
          <p className="mt-[6px] pl-[10px] leading-[13px] whitespace-nowrap">
            Enter a name and description for your new Data Connection file, and press Finish to
            <br />
            save.
          </p>
        </div>
        <WizardIcon />
      </div>

      <form className="border-t border-white px-[7px] pt-[6px] pb-[7px]">
        <label htmlFor="file" className="block leading-[18px]">File <u>N</u>ame:</label>
        <div className="flex gap-[9px] pl-px">
          <input id="file" defaultValue="db WFD Satisfaction-by-Institution-07-01-2008--06-30-2009.odc" className={clsx("h-5", field)} />
          <button type="button" className={clsx("w-[76px]", dialogButton)}>B<u>r</u>owse...</button>
        </div>
        <div className="mt-[3px] flex h-4 items-center justify-center gap-[3px] pr-[18px]">
          <input id="pwd" type="checkbox" disabled className={clsx("size-[13px] appearance-none bg-[#d4d0c8]", sunken)} />
          <label htmlFor="pwd" className="text-[#808080]">Save password in file</label>
        </div>

        <label htmlFor="desc" className="mt-px block leading-[18px]"><u>D</u>escription:</label>
        <div className="pl-px">
          <textarea id="desc" defaultValue="(To help others understand what your data connection points to)" className={clsx("h-[88px] resize-none pt-[3px] leading-[13px]", field)} />
        </div>

        <label htmlFor="friendly" className="mt-px block leading-[18px]">Fr<u>i</u>endly Name:</label>
        <div className="pl-px">
          <input id="friendly" defaultValue="db WFD Satisfaction-by-Institution-07-01-2008--06-30-2009" className={clsx("h-5", field)} />
        </div>

        <label htmlFor="keywords" className="mt-px block leading-[18px]"><u>S</u>earch Keywords:</label>
        <div className="pl-px">
          <input id="keywords" className={clsx("h-5", field)} />
        </div>

        <div className="mt-[3px] flex h-4 items-center gap-[2px] pl-px">
          <span className="relative flex">
            <input id="always" type="checkbox" defaultChecked className={clsx("size-[13px] appearance-none bg-white", sunken)} />
            <Svg size={13} className="pointer-events-none absolute inset-0"><path d="M3 6l2.500 2.500L10 4" stroke="#000" strokeWidth="2" fill="none" /></Svg>
          </span>
          <label htmlFor="always" className="border border-dotted border-black leading-[14px]"><u>A</u>lways attempt to use this file to refresh data</label>
        </div>

        <div className="mt-[3px] flex items-center gap-2">
          <span className="w-[74px] whitespace-nowrap">Excel Services:</span>
          <button type="button" className={clsx("w-[142px]", dialogButton)}>A<u>u</u>thentication Settings...</button>
        </div>

        <div className="mt-[3px] border-t border-b border-t-[#808080] border-b-white" />

        <div className="mt-1 flex justify-end">
          <button type="button" className={clsx("mr-[5px] w-[76px]", dialogButton)}>Cancel</button>
          <button type="button" className={clsx("w-[75px]", dialogButton)}>&lt; <u>B</u>ack</button>
          <button type="button" disabled className={clsx("mr-[5px] w-[76px]", dialogButton)}>Next &gt;</button>
          <button type="button" className={clsx("w-[76px] outline -outline-offset-1 outline-black", dialogButton)}><u>F</u>inish</button>
        </div>
      </form>
    </div>
  );
}

export default function App() {
  return (
    <div className="relative flex h-screen flex-col overflow-hidden bg-[#bfdbff] font-['Open_Sans','Noto_Sans',sans-serif] text-[11px]">
      <OfficeButton />
      <TitleBar />
      <TabRow />
      <Ribbon />
      <FormulaBar />
      <main className="flex min-h-0 flex-1 overflow-hidden">
        <div className="min-w-0 flex-1 overflow-hidden">
          <Grid />
        </div>
        <VerticalScrollbar />
      </main>
      <SheetTabs />
      <StatusBar />
      <Taskbar />
      <Wizard />
    </div>
  );
}
